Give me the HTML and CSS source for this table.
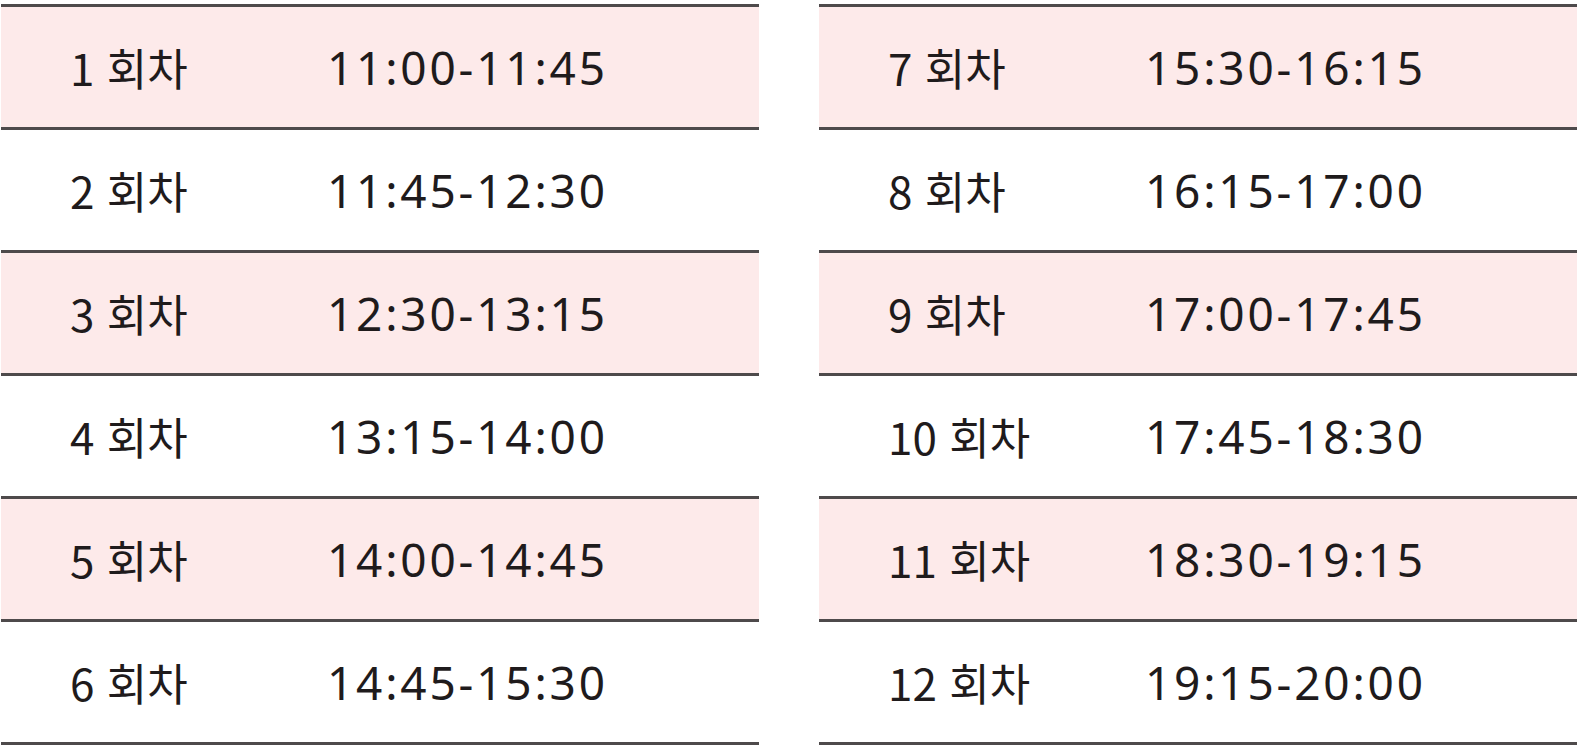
FILE: index.html
```html
<!DOCTYPE html>
<html lang="ko">
<head>
<meta charset="utf-8">
<title>회차 시간표</title>
<link rel="stylesheet" href="styles.css">
</head>
<body>
<div class="schedule">
  <div class="table">
    <div class="row pink"><span class="round">1 회차</span><span class="time">11:00-11:45</span></div>
    <div class="row"><span class="round">2 회차</span><span class="time">11:45-12:30</span></div>
    <div class="row pink"><span class="round">3 회차</span><span class="time">12:30-13:15</span></div>
    <div class="row"><span class="round">4 회차</span><span class="time">13:15-14:00</span></div>
    <div class="row pink"><span class="round">5 회차</span><span class="time">14:00-14:45</span></div>
    <div class="row"><span class="round">6 회차</span><span class="time">14:45-15:30</span></div>
  </div>
  <div class="table">
    <div class="row pink"><span class="round">7 회차</span><span class="time">15:30-16:15</span></div>
    <div class="row"><span class="round">8 회차</span><span class="time">16:15-17:00</span></div>
    <div class="row pink"><span class="round">9 회차</span><span class="time">17:00-17:45</span></div>
    <div class="row"><span class="round">10 회차</span><span class="time">17:45-18:30</span></div>
    <div class="row pink"><span class="round">11 회차</span><span class="time">18:30-19:15</span></div>
    <div class="row"><span class="round">12 회차</span><span class="time">19:15-20:00</span></div>
  </div>
</div>
</body>
</html>
```
FILE: styles.css
```css
html, body {
  margin: 0;
  padding: 0;
  background: #ffffff;
}
body {
  font-family: "Noto Sans", "Noto Sans CJK KR", sans-serif;
  color: #1f1b1c;
}
.schedule {
  display: flex;
  gap: 60px;
  padding: 4px 6px 0 1px;
}
.table {
  width: 758px;
  border-top: 3px solid #4e4a4b;
}
.row {
  display: flex;
  align-items: center;
  height: 120px;
  border-bottom: 3px solid #4e4a4b;
  padding-left: 69px;
}
.row.pink {
  background: #fdeaea;
}
.round {
  width: 257px;
  font-family: "Noto Sans CJK KR", "Noto Sans", sans-serif;
  font-size: 44px;
  font-weight: 400;
  letter-spacing: 0;
}
.time {
  font-size: 46px;
  font-weight: 400;
  letter-spacing: 2.8px;
}
```
